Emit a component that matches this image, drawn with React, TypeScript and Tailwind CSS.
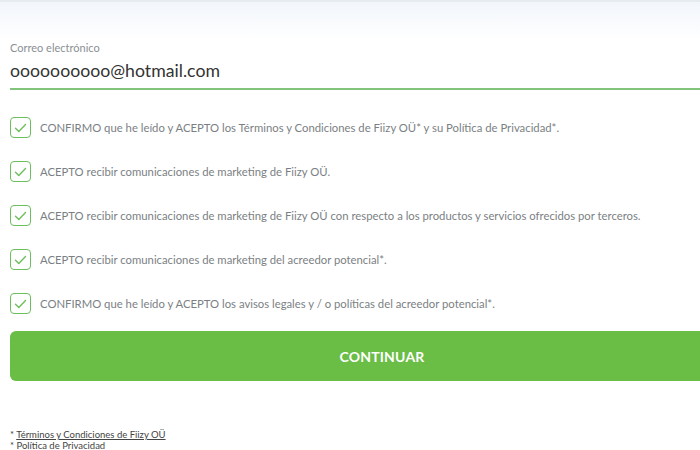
import React from "react";

const items = [
  "CONFIRMO que he leído y ACEPTO los Términos y Condiciones de Fiizy OÜ* y su Política de Privacidad*.",
  "ACEPTO recibir comunicaciones de marketing de Fiizy OÜ.",
  "ACEPTO recibir comunicaciones de marketing de Fiizy OÜ con respecto a los productos y servicios ofrecidos por terceros.",
  "ACEPTO recibir comunicaciones de marketing del acreedor potencial*.",
  "CONFIRMO que he leído y ACEPTO los avisos legales y / o políticas del acreedor potencial*.",
];

function CheckBox() {
  return (
    <span className="flex h-[21px] w-[21px] shrink-0 items-center justify-center rounded-[4px] border-[1.5px] border-[#6cbf5c] bg-white">
      <svg width="13" height="10" viewBox="0 0 13 10" fill="none">
        <path d="M1.5 5.2 L4.8 8.4 L11.5 1.6" stroke="#6cbf5c" strokeWidth="1.4" strokeLinecap="round" strokeLinejoin="round" />
      </svg>
    </span>
  );
}

export default function App() {
  return (
    <div
      className="relative h-[450px] w-[700px] overflow-hidden bg-white"
      style={{ fontFamily: "Lato, 'Noto Sans', sans-serif" }}
    >
      <div className="h-[2px] bg-[#e6ebf0]" />
      <div className="h-[39px] bg-gradient-to-b from-[#f2f6fb] to-white" />

      <div className="pl-[10px]">
        <div className="text-[11px] leading-[14px] text-[#8a8f94]">Correo electrónico</div>
        <div className="mt-[4px] text-[17.7px] leading-[24px] text-[#333]">oooooooooo@hotmail.com</div>
        <div className="mt-[5px] h-[2px] w-[760px] bg-[#82c47c]" />

        <div className="mt-[27px] flex flex-col gap-[23px]">
          {items.map((t) => (
            <div key={t} className="flex items-center gap-[9px]">
              <CheckBox />
              <span className="whitespace-nowrap text-[11.3px] leading-[21px] text-[#7b7f84]">{t}</span>
            </div>
          ))}
        </div>

        <button className="mt-[17px] flex h-[50px] w-[744px] items-center justify-center rounded-[6px] bg-[#6abd45] text-[14px] font-bold tracking-[0.2px] text-white">
          CONTINUAR
        </button>

        <div className="mt-[48px] text-[9.5px] leading-[11px] text-[#444]">
          <div>
            * <span className="underline">Términos y Condiciones de Fiizy OÜ</span>
          </div>
          <div>* Política de Privacidad</div>
        </div>
      </div>
    </div>
  );
}
